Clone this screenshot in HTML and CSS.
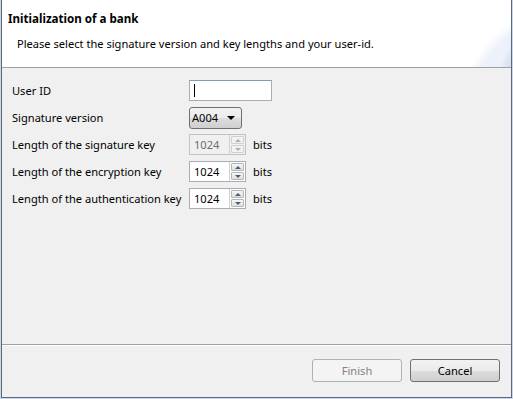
FILE: index.html
```html
<!doctype html>
<html lang="en">
<head>
    <meta charset="utf-8">
    <title>Initialization of a bank</title>
    <link rel="stylesheet" href="styles.css">
</head>
<body>
<div class="window">
    <div class="frame">
        <div class="header">
            <div class="title">Initialization of a bank</div>
            <div class="subtitle">Please select the signature version and key lengths and your user-id.</div>
        </div>

        <div class="content">
            <div class="row">
                <span class="label">User ID</span>
                <span class="textbox"><span class="caret"></span></span>
            </div>

            <div class="row">
                <span class="label">Signature version</span>
                <span class="combo">A004<span class="combo-arrow"></span></span>
            </div>

            <div class="row">
                <span class="label">Length of the signature key</span>
                <span class="spinner disabled">
                    <span class="spin-value">1024</span>
                    <span class="spin-buttons"><span class="spin-up"></span><span class="spin-down"></span></span>
                </span>
                <span class="unit">bits</span>
            </div>

            <div class="row">
                <span class="label">Length of the encryption key</span>
                <span class="spinner">
                    <span class="spin-value">1024</span>
                    <span class="spin-buttons"><span class="spin-up"></span><span class="spin-down"></span></span>
                </span>
                <span class="unit">bits</span>
            </div>

            <div class="row">
                <span class="label">Length of the authentication key</span>
                <span class="spinner">
                    <span class="spin-value">1024</span>
                    <span class="spin-buttons"><span class="spin-up"></span><span class="spin-down"></span></span>
                </span>
                <span class="unit">bits</span>
            </div>
        </div>

        <div class="footer">
            <button class="btn" disabled>Finish</button>
            <button class="btn">Cancel</button>
        </div>
    </div>
</div>
</body>
</html>
```

FILE: styles.css
```css
body {
    margin: 0;
    font-family: "Noto Sans", "Open Sans", sans-serif;
    font-size: 11.1px;
    color: #000;
    background: #fff;
}

.window {
    width: 513px;
    height: 399px;
    box-sizing: border-box;
    border: 1px solid #cbd6e6;
    border-top: none;
}

.frame {
    height: 100%;
    box-sizing: border-box;
    border: 1px solid #5d6878;
    border-top: none;
    background: #f0f0f0;
    display: flex;
    flex-direction: column;
}

/* soft blue swoosh in the right corner of the banner */
.header {
    height: 67px;
    background:
        radial-gradient(ellipse 90px 115px at 565px 105px, #d6dff2 0%, #dae2f3 75%, rgba(218, 226, 243, 0) 82%),
        radial-gradient(ellipse 125px 145px at 555px 125px, #e9eef9 0%, #edf1fa 72%, rgba(237, 241, 250, 0) 80%),
        #fff;
    border-bottom: 1px solid #a0a0a0;
    padding: 0 6px;
}

.title {
    font-weight: bold;
    font-size: 11.6px;
    margin-top: 11px;
    line-height: 16px;
}

.subtitle {
    margin: 9px 0 0 9px;
    line-height: 16px;
}

.content {
    flex: 1;
    border-bottom: 1px solid #a0a0a0;
    box-shadow: 0 1px 0 #fff;
    padding: 9px 0 0 10px;
}

.row {
    display: flex;
    align-items: center;
    height: 27px;
}

.label {
    width: 177px;
    white-space: nowrap;
}

.textbox {
    display: block;
    width: 81px;
    height: 19px;
    border: 1px solid #abadb3;
    border-top-color: #7f9db9;
    background: #fff;
    position: relative;
}

.caret {
    position: absolute;
    left: 4px;
    top: 3px;
    width: 1px;
    height: 13px;
    background: #000;
}

.combo {
    display: flex;
    align-items: center;
    width: 49px;
    height: 20px;
    padding-left: 2px;
    border: 1px solid #707070;
    border-radius: 3px;
    background: linear-gradient(#f2f2f2, #ebebeb 50%, #dddddd 51%, #cfcfcf);
}

.combo-arrow {
    margin-left: auto;
    margin-right: 6px;
    border-left: 4px solid transparent;
    border-right: 4px solid transparent;
    border-top: 4px solid #000;
}

.spinner {
    display: flex;
    width: 55px;
    height: 19px;
    border: 1px solid #abadb3;
    background: #fff;
}

.spin-value {
    flex: 1;
    padding-left: 4px;
    line-height: 19px;
}

.spin-buttons {
    display: flex;
    flex-direction: column;
    width: 13px;
    border-left: 1px solid #d0d0d0;
    padding: 1px;
    gap: 1px;
}

.spin-up, .spin-down {
    flex: 1;
    background: linear-gradient(#f6f6f6, #e0e0e0);
    border: 1px solid #b6b6b6;
    border-radius: 1px;
    display: flex;
    justify-content: center;
    align-items: center;
}

.spin-up::after {
    content: "";
    border-left: 3px solid transparent;
    border-right: 3px solid transparent;
    border-bottom: 3px solid #4a5a80;
}

.spin-down::after {
    content: "";
    border-left: 3px solid transparent;
    border-right: 3px solid transparent;
    border-top: 3px solid #4a5a80;
}

.spinner.disabled {
    background: #f0f0f0;
    border-color: #c2c2c2;
    color: #6d6d6d;
}

.spinner.disabled .spin-up, .spinner.disabled .spin-down {
    border-color: #d0d0d0;
    background: #f2f2f2;
}

.spinner.disabled .spin-up::after {
    border-bottom-color: #b0b0b0;
}

.spinner.disabled .spin-down::after {
    border-top-color: #b0b0b0;
}

.unit {
    padding-left: 7px;
}

.footer {
    height: 52px;
    display: flex;
    justify-content: flex-end;
    align-items: flex-start;
    gap: 8px;
    padding: 14px 11px 0 0;
    box-sizing: border-box;
}

.btn {
    width: 90px;
    height: 23px;
    font: inherit;
    border: 1px solid #707070;
    border-radius: 3px;
    background: linear-gradient(#f2f2f2, #ebebeb 50%, #dddddd 51%, #cfcfcf);
    color: #000;
    padding: 0;
}

.btn:disabled {
    border-color: #adb2b5;
    background: #f4f4f4;
    color: #838383;
}
```
